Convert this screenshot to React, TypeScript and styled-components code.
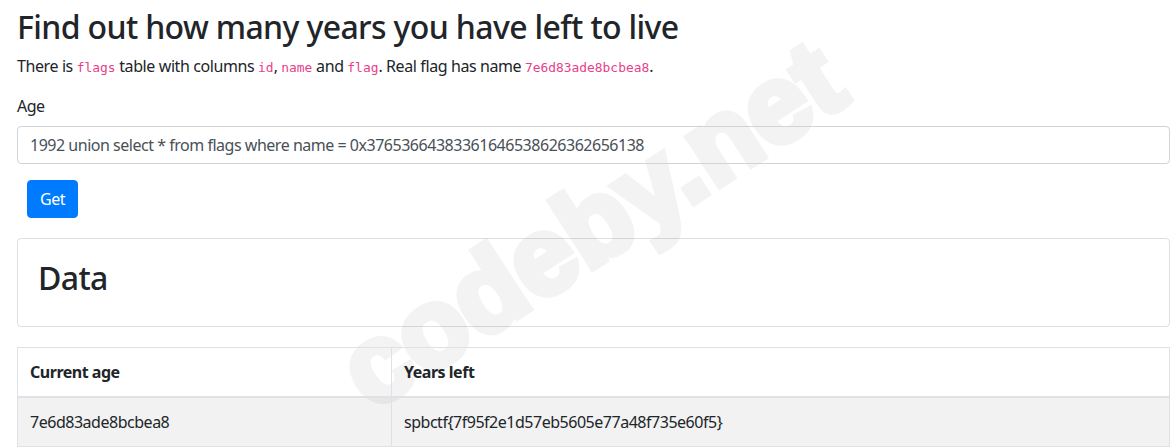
import React from "react";
import styled, { createGlobalStyle } from "styled-components";

const GlobalStyle = createGlobalStyle`
  html, body { margin: 0; padding: 0; background: #fff; }
  body {
    font-family: "Noto Sans", "Open Sans", sans-serif;
    font-size: 16px;
    line-height: 1.5;
    letter-spacing: -0.03em;
    color: #212529;
  }
  * { box-sizing: border-box; }
`;

const Page = styled.main`
  position: relative;
  padding: 8px 5px 0 17px;
  overflow: hidden;
  height: 447px;
`;

const Content = styled.div`
  position: relative;
  z-index: 1;
`;

const Title = styled.h2`
  margin: 0 0 8px;
  font-size: 32px;
  font-weight: 500;
  line-height: 1.2;
  letter-spacing: -0.02em;
`;

const Lead = styled.p`
  margin: 0 0 16px;
  letter-spacing: -0.025em;
`;

const Code = styled.code`
  font-family: "DejaVu Sans Mono", "Liberation Mono", monospace;
  font-size: 12.9px;
  letter-spacing: 0;
  color: #e83e8c;
`;

const FormGroup = styled.div`
  display: flex;
  flex-direction: column;
  margin-bottom: 16px;
`;

const Label = styled.label`
  margin-bottom: 8px;
`;

const Input = styled.input`
  height: 38px;
  width: 100%;
  padding: 6px 12px;
  font: inherit;
  letter-spacing: inherit;
  color: #495057;
  background: transparent;
  border: 1px solid #ced4da;
  border-radius: 4px;
  outline: none;
`;

const Button = styled.button`
  margin-left: 10px;
  height: 38px;
  padding: 6px 12px;
  font: inherit;
  letter-spacing: inherit;
  color: #fff;
  background: #007bff;
  border: 1px solid #007bff;
  border-radius: 4px;
`;

const Card = styled.section`
  margin-top: 20px;
  padding: 20px;
  border: 1px solid rgba(0, 0, 0, 0.125);
  border-radius: 4px;
`;

const CardTitle = styled.h1`
  margin: 0 0 8px;
  font-size: 32px;
  font-weight: 500;
  line-height: 1.2;
  letter-spacing: -0.02em;
`;

const Table = styled.table`
  margin-top: 20px;
  width: 100%;
  border-collapse: collapse;
  border: 1px solid #dee2e6;
`;

const Th = styled.th<{ $w?: number }>`
  width: ${(p) => (p.$w ? `${p.$w}px` : "auto")};
  padding: 12px;
  text-align: left;
  font-weight: 700;
  vertical-align: bottom;
  border: 1px solid #dee2e6;
  border-bottom-width: 2px;
`;

const Row = styled.tr<{ $striped?: boolean }>`
  background: ${(p) => (p.$striped ? "rgba(0, 0, 0, 0.05)" : "transparent")};
`;

const Td = styled.td`
  padding: 12px;
  vertical-align: top;
  border: 1px solid #dee2e6;
`;

const Watermark = styled.div`
  position: absolute;
  z-index: 0;
  left: 591px;
  top: 224px;
  transform: translate(-50%, -50%) rotate(-33deg);
  font-family: "Liberation Sans", Arial, sans-serif;
  font-weight: 700;
  font-size: 110px;
  line-height: 1;
  letter-spacing: 0;
  color: #f3f3f3;
  -webkit-text-stroke: 7px #f3f3f3;
  paint-order: stroke fill;
  white-space: nowrap;
  pointer-events: none;
  user-select: none;
`;

export default function App() {
  return (
    <>
      <GlobalStyle />
      <Page>
        <Watermark aria-hidden="true">codeby.net</Watermark>
        <Content>
          <Title>Find out how many years you have left to live</Title>
          <Lead>
            There is <Code>flags</Code> table with columns <Code>id</Code>, <Code>name</Code> and{" "}
            <Code>flag</Code>. Real flag has name <Code>7e6d83ade8bcbea8</Code>.
          </Lead>
          <FormGroup>
            <Label htmlFor="age">Age</Label>
            <Input
              id="age"
              defaultValue="1992 union select * from flags where name = 0x37653664383361646538626362656138"
            />
          </FormGroup>
          <Button type="button">Get</Button>
          <Card>
            <CardTitle>Data</CardTitle>
          </Card>
          <Table>
            <thead>
              <tr>
                <Th $w={374}>Current age</Th>
                <Th>Years left</Th>
              </tr>
            </thead>
            <tbody>
              <Row $striped>
                <Td>7e6d83ade8bcbea8</Td>
                <Td>spbctf{"{"}7f95f2e1d57eb5605e77a48f735e60f5{"}"}</Td>
              </Row>
            </tbody>
          </Table>
        </Content>
      </Page>
    </>
  );
}
